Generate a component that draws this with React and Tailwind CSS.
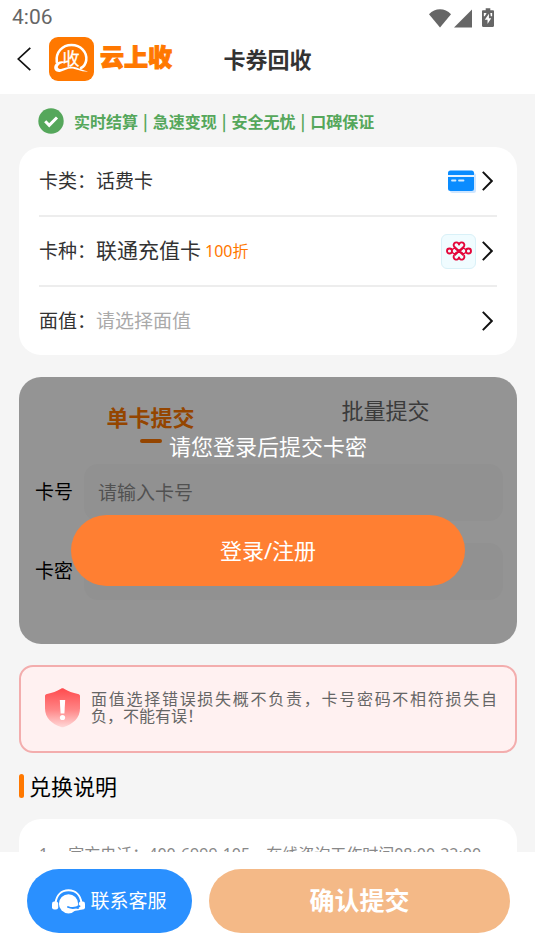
import React from "react";

function WifiIcon() {
  return (
    <svg className="h-5 w-[22px]" viewBox="0 0 22 20" fill="#666" aria-hidden="true">
      <path d="M11 19.5 0 6.2C3 3 7 1.3 11 1.3s8 1.7 11 4.9z" />
    </svg>
  );
}

function SignalIcon() {
  return (
    <svg className="ml-[3px] h-5 w-[18px]" viewBox="0 0 18 20" fill="#666" aria-hidden="true">
      <path d="M18 1.5v18H0z" />
    </svg>
  );
}

function BatteryIcon() {
  return (
    <svg className="ml-2.5 h-5 w-3" viewBox="0 0 13 21" aria-hidden="true">
      <path fill="#666" d="M4 0h5v2h2.8c.7 0 1.2.5 1.2 1.200V19c0 .7-.5 1.200-1.200 1.200H1.200C.5 20.200 0 19.700 0 19V3.200C0 2.500.5 2 1.200 2H4z" />
      <path fill="#fff" d="M7.500 6 3 12.500h3V17l4-6.200H7.500zM2 5h3L3 8.500H2zM9 5h2v3.500H9.500z" />
    </svg>
  );
}

function BackIcon() {
  return (
    <svg className="h-6 w-3.5" viewBox="0 0 14 24" fill="none" stroke="#111" strokeWidth="1.7" aria-hidden="true">
      <path d="M13.300.8 1.300 12l12 11.200" />
    </svg>
  );
}

function LogoMark() {
  return (
    <svg className="h-11 w-[45px]" viewBox="0 0 45 44" aria-hidden="true">
      <rect width="45" height="44" rx="9" fill="#ff7800" />
      <path
        d="M7.800 25C6.500 15 13.500 8 22.500 8S38.500 15 37.200 23.500c-.6 3.500-2.400 6-5.200 7.500"
        fill="none"
        stroke="#fff"
        strokeWidth="2.600"
        strokeLinecap="round"
      />
      <path
        d="M17 25.300c-4-2.200-10-.8-11.500 3.400-1.300 4 2 7 6 6 4.500-1.200 8-4.200 14-2.800 4.500 1 8.500 3.300 13.500 2.300-4-.2-7-2.200-11.500-3.700-6-1.800-11 .8-15.500 1.400-3 0-4-1.700-2.500-3.500 1.600-1.900 5-2.800 7.500-3.100z"
        fill="#fff"
      />
      <text x="22" y="28" textAnchor="middle" fontSize="17" fill="#fff" stroke="#fff" strokeWidth="0.300" fontFamily="Noto Sans CJK SC, sans-serif">
        收
      </text>
    </svg>
  );
}

function CheckBadge() {
  return (
    <svg className="size-[26px] shrink-0" viewBox="0 0 26 26" aria-hidden="true">
      <circle cx="13" cy="13" r="12.700" fill="#55a75b" />
      <path d="m7.200 13.300 4 4 7.800-7.800" fill="none" stroke="#fff" strokeWidth="3" />
    </svg>
  );
}

function ChevronRight() {
  return (
    <svg className="h-5 w-[11px] shrink-0" viewBox="0 0 11 20" fill="none" stroke="#111" strokeWidth="2" aria-hidden="true">
      <path d="m.8.9 9 9.100-9 9.100" />
    </svg>
  );
}

function CardIcon() {
  return (
    <svg className="h-[23px] w-7" viewBox="0 0 28 23" aria-hidden="true">
      <rect x="2" y="3" width="26" height="20" rx="2.500" fill="#cfe6ff" />
      <path d="M2.500.5h21A2.500 2.500 0 0 1 26 3v2H0V3A2.500 2.500 0 0 1 2.500.5z" fill="#0a8cff" />
      <path d="M0 5h26v2H0z" fill="#e6f2ff" />
      <path d="M0 7h26v11.500a2.500 2.500 0 0 1-2.500 2.500h-21A2.500 2.500 0 0 1 0 18.500z" fill="#0a8cff" />
      <path d="M4 10.500h3.500M11 10.500h4.500" stroke="#cfeaff" strokeWidth="1.800" strokeLinecap="round" />
    </svg>
  );
}

function KnotIcon() {
  return (
    <span className="flex size-[35px] items-center justify-center rounded-md border border-[#d9f1f8] bg-[#f0fcff]">
      <svg className="h-5 w-[26px]" viewBox="0 0 26 20" fill="none" stroke="#e4063a" strokeWidth="1.900" strokeLinejoin="round" aria-hidden="true">
        <circle cx="3.500" cy="10" r="2.500" />
        <circle cx="22.500" cy="10" r="2.500" />
        <path d="M17.500 14.200 8.300 5.800a2.700 2.700 0 1 1 4.700-2.300 2.700 2.700 0 1 1 4.700 2.300L8.500 14.200" />
        <path d="m8.500 14.200-.2 0a2.700 2.700 0 1 0 4.700 2.300 2.700 2.700 0 1 0 4.700-2.300" />
        <path d="M5.700 8.800 8.500 7l4.500 4 4.500-4 2.800 1.800M5.700 11.200 8.500 13 13 9l4.500 4 2.800-1.800" strokeWidth="1.400" />
      </svg>
    </span>
  );
}

function ShieldIcon() {
  return (
    <svg className="h-10 w-[35px] shrink-0" viewBox="0 0 35 40" aria-hidden="true">
      <defs>
        <linearGradient id="shield" x1="0" y1="0" x2="0" y2="1">
          <stop offset="0" stopColor="#ff4b4e" />
          <stop offset="0.550" stopColor="#ff8586" />
          <stop offset="1" stopColor="#ffd8d8" />
        </linearGradient>
      </defs>
      <path
        d="M16 .8c1-.6 2-.6 3 0 4.500 2.800 8.500 4.200 14 5.200 1.200.2 2 .9 2 2.200v12C35 30 28 36 19 39c-1 .3-2 .3-3 0C7 36 0 30 0 20.200v-12C0 6.900.8 6.200 2 6 7.500 5 11.500 3.600 16 .8z"
        fill="url(#shield)"
      />
      <path d="M14.800 12h5.400l-.8 13.500h-3.800z" fill="#fff" />
      <circle cx="17.500" cy="29.500" r="2.600" fill="#fff" />
    </svg>
  );
}

function HeadsetIcon() {
  return (
    <svg className="h-[25px] w-[33px]" viewBox="0 0 33 25" aria-hidden="true">
      <path d="M3.500 14C4.500 6 9.500 1.200 16.500 1.200S28.500 6 29.500 14" fill="none" stroke="#fff" strokeWidth="2" />
      <rect x="0" y="12.500" width="6.200" height="8" rx="2.200" fill="#fff" />
      <rect x="26.800" y="12.500" width="6.200" height="8" rx="2.200" fill="#fff" />
      <circle cx="16.500" cy="14.800" r="9.600" fill="#fff" />
      <path d="M16 18c3.500 1.500 7.500 1.300 11.500-.8" fill="none" stroke="#2a90ff" strokeWidth="1.900" strokeLinecap="round" />
      <path d="M29.500 19.500c-1.800.9-3.500 1.300-6 1.400" fill="none" stroke="#fff" strokeWidth="1.700" strokeLinecap="round" />
    </svg>
  );
}

function SelectRow({ label, children, icon, className }) {
  return (
    <button type="button" className={"flex w-full items-center border-[#ededed] text-left " + className}>
      <span className="text-[19px] text-[#333]">{label}：</span>
      {children}
      <span className="ml-auto flex items-center gap-1.5 pr-1">
        {icon}
        <ChevronRight />
      </span>
    </button>
  );
}

function CardField({ id, label, placeholder }) {
  return (
    <div className="flex items-center">
      <label htmlFor={id} className="w-[49px] shrink-0 text-[19px] text-black">
        {label}
      </label>
      <input
        id={id}
        type="text"
        placeholder={placeholder}
        className="h-[57px] min-w-0 flex-1 rounded-[14px] bg-[#fafafa] px-3.5 text-[19px] text-black placeholder:text-[#8c8c8c]"
      />
    </div>
  );
}

const promises = ["实时结算", "急速变现", "安全无忧", "口碑保证"];

export default function App() {
  return (
    <div className="flex h-screen flex-col bg-[#f5f5f5] font-['Noto_Sans','Noto_Sans_CJK_SC',sans-serif] leading-normal" lang="zh-CN">
      <header className="shrink-0 bg-white">
        <div className="flex h-9 items-center pr-[41px] pl-3">
          <span className="font-[Roboto,sans-serif] text-[21px] text-[#666]">4:06</span>
          <span className="ml-auto flex items-center">
            <WifiIcon />
            <SignalIcon />
            <BatteryIcon />
          </span>
        </div>
        <div className="grid h-[58px] grid-cols-[1fr_auto_1fr] items-center pb-3">
          <div className="flex items-center pl-[17px]">
            <button type="button" aria-label="返回">
              <BackIcon />
            </button>
            <span className="ml-[18px]">
              <LogoMark />
            </span>
            <span className="ml-1.5 pb-1 text-2xl font-black whitespace-nowrap text-[#ff7800] [-webkit-text-stroke:1px_#ff7800]">云上收</span>
          </div>
          <h1 className="text-[22px] font-bold text-[#333]">卡券回收</h1>
        </div>
      </header>

      <main className="min-h-0 flex-1 overflow-y-auto pr-[18px] pl-[19px] [scrollbar-width:none]">
        <div className="flex h-[53px] items-center gap-2.5 pl-[19px] text-[#55a75b]">
          <CheckBadge />
          <p className="flex gap-[5px] font-['Noto_Sans_CJK_SC',sans-serif] text-base font-bold whitespace-nowrap">
            {promises.map((text, i) => (
              <React.Fragment key={text}>
                {i > 0 && <span>|</span>}
                <span>{text}</span>
              </React.Fragment>
            ))}
          </p>
        </div>

        <section className="rounded-[22px] bg-white px-5">
          <SelectRow label="卡类" icon={<CardIcon />} className="h-[70px] border-b-2">
            <span className="text-[19px] text-[#333]">话费卡</span>
          </SelectRow>
          <SelectRow label="卡种" icon={<KnotIcon />} className="h-[70px] border-b-2">
            <span className="text-[21px] text-[#333]">联通充值卡</span>
            <span className="ml-1 text-base text-[#ff7800]">100折</span>
          </SelectRow>
          <SelectRow label="面值" className="h-[68px]">
            <span className="text-[19px] text-[#aaa]">请选择面值</span>
          </SelectRow>
        </section>

        <section className="relative mt-[22px] overflow-hidden rounded-[22px] bg-white px-3.5 pt-[22px] pb-11">
          <div className="grid h-[65px] grid-cols-2 items-start">
            <button type="button" className="flex flex-col items-center gap-1.5 pt-0.5 text-[22px] leading-8 font-bold text-[#ff7800]">
              单卡提交
              <span className="h-1 w-[22px] rounded-sm bg-[#ff7800]" />
            </button>
            <button type="button" className="text-[22px] leading-[22px] text-[#666]">
              批量提交
            </button>
          </div>
          <div className="flex flex-col gap-[22px] pl-0.5">
            <CardField id="card-number" label="卡号" placeholder="请输入卡号" />
            <CardField id="card-secret" label="卡密" placeholder="请输入卡密" />
          </div>
          <div className="absolute inset-0 flex flex-col items-center bg-black/42 pt-[53px] text-[22px] text-white">
            <p className="leading-8">请您登录后提交卡密</p>
            <button type="button" className="mt-[53px] h-[71px] w-[79%] rounded-full bg-[#ff7f32]">
              登录/注册
            </button>
          </div>
        </section>

        <section className="mt-[21px] flex h-[88px] items-center gap-[11px] rounded-[14px] border-2 border-[#f3adad] bg-[#fff1f1] pr-[18px] pb-0.5 pl-6">
          <ShieldIcon />
          <p className="text-justify text-base leading-[17px] text-[#666]">
            面值选择错误损失概不负责，卡号密码不相符损失自
            <span className="whitespace-nowrap">负，不能有误！</span>
          </p>
        </section>

        <div className="mt-[17px] flex items-center gap-[5px]">
          <span className="h-6 w-[5px] rounded-full bg-[#ff7800]" />
          <h2 className="text-[22px] leading-8 text-black">兑换说明</h2>
        </div>

        <section className="mt-[17px] rounded-[22px] bg-white px-5 py-[23px] text-base text-[#888]">
          <p className="whitespace-nowrap">1、 官方电话：400-6999-105，在线咨询工作时间08:00-22:00</p>
        </section>
      </main>

      <footer className="flex shrink-0 gap-[17px] bg-white pt-[17px] pr-[25px] pb-[18px] pl-[27px]">
        <button type="button" className="flex h-16 w-[165px] items-center justify-center gap-[5px] rounded-full bg-[#2a90ff] text-[19px] text-white">
          <HeadsetIcon />
          联系客服
        </button>
        <button type="button" className="h-16 flex-1 rounded-full bg-[#f4b987] text-[25px] font-bold text-white">
          确认提交
        </button>
      </footer>
    </div>
  );
}
